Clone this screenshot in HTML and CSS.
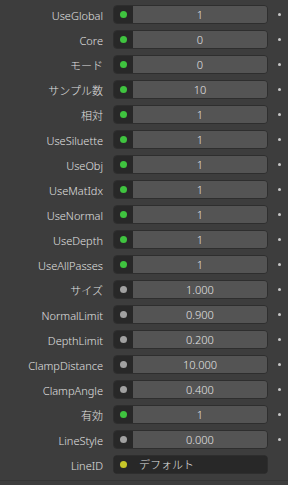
FILE: index.html
```html
<!DOCTYPE html>
<html lang="ja">
<head>
    <meta charset="UTF-8">
    <title>Node</title>
    <link rel="stylesheet" href="styles.css">
</head>
<body>
    <div class="panel">
        <div class="row"><span class="label">UseGlobal</span><div class="field"><span class="sock"><i class="dot green"></i></span><span class="value">1</span></div><i class="pin"></i></div>
        <div class="row"><span class="label">Core</span><div class="field"><span class="sock"><i class="dot green"></i></span><span class="value">0</span></div><i class="pin"></i></div>
        <div class="row"><span class="label">モード</span><div class="field"><span class="sock"><i class="dot green"></i></span><span class="value">0</span></div><i class="pin"></i></div>
        <div class="row"><span class="label">サンプル数</span><div class="field"><span class="sock"><i class="dot green"></i></span><span class="value">10</span></div><i class="pin"></i></div>
        <div class="row"><span class="label">相対</span><div class="field"><span class="sock"><i class="dot green"></i></span><span class="value">1</span></div><i class="pin"></i></div>
        <div class="row"><span class="label">UseSiluette</span><div class="field"><span class="sock"><i class="dot green"></i></span><span class="value">1</span></div><i class="pin"></i></div>
        <div class="row"><span class="label">UseObj</span><div class="field"><span class="sock"><i class="dot green"></i></span><span class="value">1</span></div><i class="pin"></i></div>
        <div class="row"><span class="label">UseMatIdx</span><div class="field"><span class="sock"><i class="dot green"></i></span><span class="value">1</span></div><i class="pin"></i></div>
        <div class="row"><span class="label">UseNormal</span><div class="field"><span class="sock"><i class="dot green"></i></span><span class="value">1</span></div><i class="pin"></i></div>
        <div class="row"><span class="label">UseDepth</span><div class="field"><span class="sock"><i class="dot green"></i></span><span class="value">1</span></div><i class="pin"></i></div>
        <div class="row"><span class="label">UseAllPasses</span><div class="field"><span class="sock"><i class="dot green"></i></span><span class="value">1</span></div><i class="pin"></i></div>
        <div class="row"><span class="label">サイズ</span><div class="field"><span class="sock"><i class="dot grey"></i></span><span class="value">1.000</span></div><i class="pin"></i></div>
        <div class="row"><span class="label">NormalLimit</span><div class="field"><span class="sock"><i class="dot grey"></i></span><span class="value">0.900</span></div><i class="pin"></i></div>
        <div class="row"><span class="label">DepthLimit</span><div class="field"><span class="sock"><i class="dot grey"></i></span><span class="value">0.200</span></div><i class="pin"></i></div>
        <div class="row"><span class="label">ClampDistance</span><div class="field"><span class="sock"><i class="dot grey"></i></span><span class="value">10.000</span></div><i class="pin"></i></div>
        <div class="row"><span class="label">ClampAngle</span><div class="field"><span class="sock"><i class="dot grey"></i></span><span class="value">0.400</span></div><i class="pin"></i></div>
        <div class="row"><span class="label">有効</span><div class="field"><span class="sock"><i class="dot green"></i></span><span class="value">1</span></div><i class="pin"></i></div>
        <div class="row"><span class="label">LineStyle</span><div class="field"><span class="sock"><i class="dot grey"></i></span><span class="value">0.000</span></div><i class="pin"></i></div>
        <div class="row"><span class="label">LineID</span><div class="field text"><span class="sock"><i class="dot yellow"></i></span><span class="value">デフォルト</span></div></div>
    </div>
</body>
</html>
```

FILE: styles.css
```css
body {
  margin: 0;
  background: #3d3d3d;
  font-family: "Noto Sans", "Noto Sans CJK JP", sans-serif;
  font-size: 11px;
  font-weight: 300;
  color: #e0e0e0;
}
.panel {
  padding-top: 2px;
  height: 478px;
  border-bottom: 1px solid #353535;
}
.row {
  display: flex;
  align-items: center;
  height: 25px;
}
.label {
  width: 103px;
  text-align: right;
  white-space: nowrap;
  line-height: 19px;
  padding-top: 1px;
}
.field {
  display: flex;
  margin-left: 10px;
  width: 155px;
  height: 19px;
  box-sizing: border-box;
  border: 1px solid #2e2e2e;
  border-radius: 4px;
  overflow: hidden;
}
.sock {
  width: 19px;
  background: #282828;
  display: flex;
  align-items: center;
  justify-content: center;
}
.value {
  flex: 1;
  background: #545454;
  text-align: center;
  line-height: 18px;
  color: #e4e4e4;
}
.field.text,
.field.text .value {
  background: #282828;
}
.field.text .value {
  text-align: left;
  padding-left: 6px;
}
.dot {
  width: 7px;
  height: 7px;
  border-radius: 50%;
}
.green { background: #3fc43f; }
.grey { background: #a1a1a1; }
.yellow { background: #c7c729; }
.pin {
  width: 3px;
  height: 3px;
  margin-left: 10px;
  border-radius: 50%;
  background: #c8c8c8;
}
```
